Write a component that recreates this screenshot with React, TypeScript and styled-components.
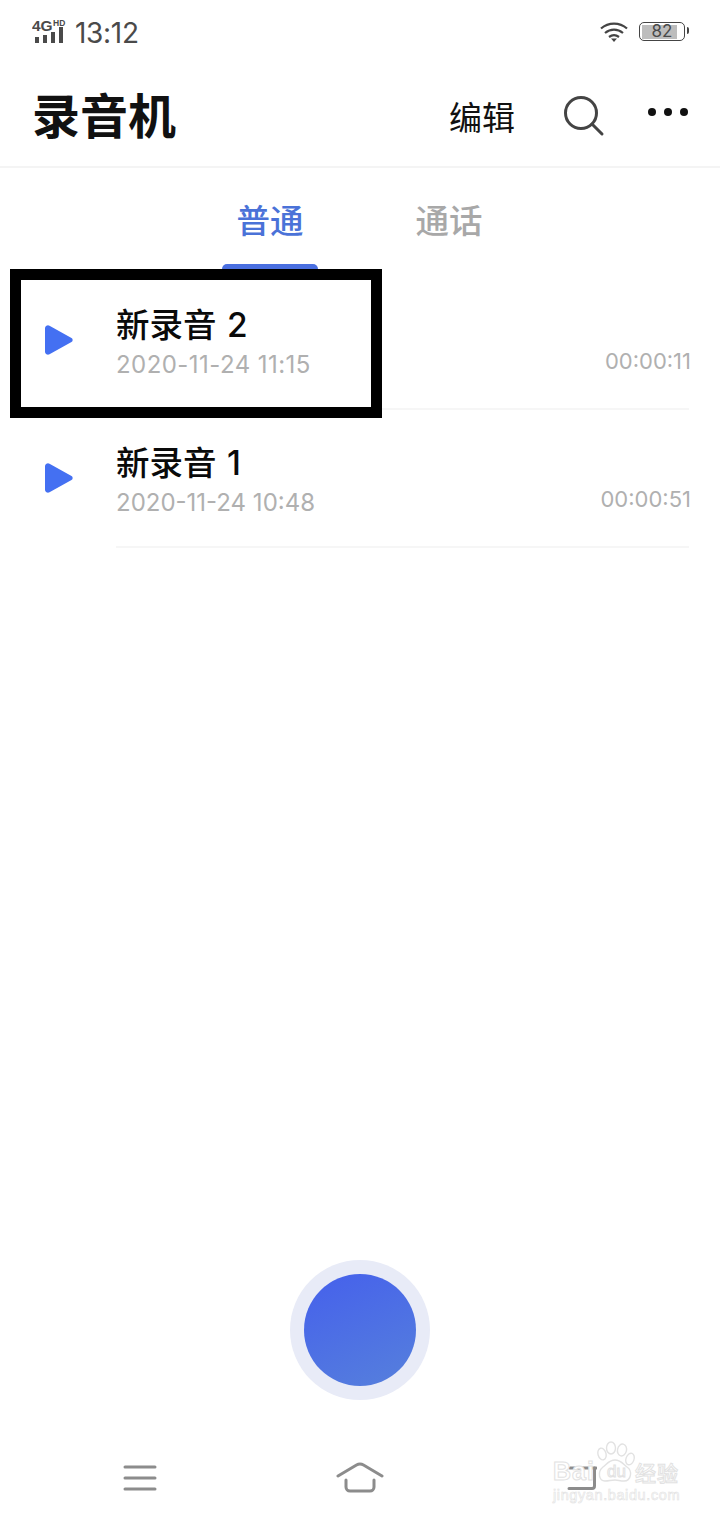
import React from 'react';
import styled, { createGlobalStyle } from 'styled-components';

const GlobalStyle = createGlobalStyle`
  html, body {
    margin: 0;
    padding: 0;
    background: #fff;
  }
  body {
    font-family: "Inter", "Noto Sans CJK SC", sans-serif;
  }
`;

const Page = styled.div`
  position: relative;
  width: 720px;
  height: 1520px;
  display: flex;
  flex-direction: column;
  overflow: hidden;
  background: #fff;
`;

const StatusBar = styled.div`
  height: 66px;
  padding: 0 32px;
  box-sizing: border-box;
  display: flex;
  align-items: center;
  justify-content: space-between;
`;

const StatusLeft = styled.div`
  display: flex;
  align-items: center;
  gap: 9px;
`;

const SignalIcon = styled.svg`
  margin-bottom: 4px;
`;

const StatusRight = styled.div`
  display: flex;
  align-items: center;
  gap: 11px;
  margin-bottom: 3px;
`;

const Clock = styled.span`
  font-family: "Inter", sans-serif;
  font-size: 28px;
  color: #4a4a4a;
  letter-spacing: -0.3px;
`;

const Battery = styled.div`
  position: relative;
  width: 46px;
  height: 19px;
  border: 1.5px solid #444;
  border-radius: 5px;
  box-sizing: border-box;
  padding: 1.5px 7.5px 1.5px 1.5px;
  display: flex;
  margin-right: 3px;
  &::after {
    content: '';
    position: absolute;
    right: -5px;
    top: 4px;
    width: 2px;
    height: 7px;
    background: #444;
    border-radius: 0 2px 2px 0;
  }
`;

const BatteryFill = styled.div`
  flex: 1;
  padding-left: 6px;
  background: #bdbdbd;
  color: #4a4a4a;
  font-size: 17px;
  line-height: 13px;
  text-align: center;
`;

const Header = styled.header`
  height: 102px;
  box-sizing: border-box;
  padding: 0 32px;
  display: flex;
  align-items: center;
  border-bottom: 2px solid #f4f4f4;
`;

const Title = styled.h1`
  flex: 1;
  margin: 0 0 6px;
  font-family: "Noto Sans CJK SC", sans-serif;
  font-size: 48px;
  font-weight: 700;
  color: #111;
  line-height: 1;
`;

const HeaderAction = styled.span`
  font-family: "Noto Sans CJK SC", sans-serif;
  font-size: 33px;
  color: #111;
  margin-right: 49px;
`;

const SearchButton = styled.div`
  display: flex;
  margin-right: 43px;
`;

const Dots = styled.div`
  display: flex;
  gap: 8px;
  margin-bottom: 8px;
`;

const Dot = styled.i`
  display: block;
  width: 8px;
  height: 8px;
  border-radius: 50%;
  background: #111;
`;

const Tabs = styled.nav`
  height: 102px;
  display: flex;
  justify-content: center;
  gap: 83px;
  padding-right: 1px;
`;

const Tab = styled.div<{ $active?: boolean }>`
  position: relative;
  width: 96px;
  padding-top: 27px;
  text-align: center;
  font-family: "Noto Sans CJK SC", sans-serif;
  font-size: 33.5px;
  font-weight: 500;
  line-height: 48px;
  color: ${(p) => (p.$active ? '#4a72d8' : '#a8a8a8')};
  box-sizing: border-box;
  ${(p) =>
    p.$active &&
    `&::after {
      content: '';
      position: absolute;
      left: 0;
      right: 0;
      bottom: 0;
      height: 6px;
      border-radius: 5px 5px 0 0;
      background: #4a6fe0;
    }`}
`;

const List = styled.div`
  flex: 1;
  padding-top: 2px;
`;

const Row = styled.div`
  height: 138px;
  display: flex;
  box-sizing: border-box;
  padding-left: 45px;
`;

const PlayIcon = styled.svg`
  width: 28px;
  height: 30px;
  margin-top: 53px;
  flex: none;
`;

const RowBody = styled.div`
  flex: 1;
  margin: 0 31px 0 43px;
  border-bottom: 2px solid #f6f6f6;
  display: flex;
  justify-content: space-between;
  align-items: flex-start;
`;

const RowName = styled.div`
  margin-top: 30px;
  font-family: "Inter", "Noto Sans CJK SC", sans-serif;
  font-size: 33.5px;
  font-weight: 500;
  word-spacing: 1.5px;
  line-height: 46px;
  color: #0a0a0a;
`;

const RowDate = styled.div<{ $spacing: number }>`
  margin-top: 1px;
  font-size: 24px;
  line-height: 32px;
  letter-spacing: ${(p) => p.$spacing}px;
  color: #b0b0b0;
`;

const Duration = styled.div`
  margin-top: 74px;
  margin-right: -2px;
  font-size: 22px;
  line-height: 30px;
  color: #b0b0b0;
`;

const RecordArea = styled.div`
  display: flex;
  justify-content: center;
  padding: 0 0 46px;
`;

const RecordRing = styled.div`
  width: 140px;
  height: 140px;
  border-radius: 50%;
  background: #e8ebf7;
  display: flex;
  align-items: center;
  justify-content: center;
`;

const RecordButton = styled.div`
  width: 112px;
  height: 112px;
  border-radius: 50%;
  background: linear-gradient(155deg, #4560ec 0%, #5680dc 100%);
`;

const NavBar = styled.div`
  height: 74px;
  padding: 0 123px 10px;
  box-sizing: border-box;
  display: flex;
  align-items: center;
  justify-content: space-between;
`;

const NavIcon = styled.svg`
  flex: none;
  fill: none;
  stroke: #8c8c8c;
  stroke-width: 3;
  stroke-linecap: round;
  stroke-linejoin: round;
`;

const Highlight = styled.div`
  position: absolute;
  left: 10px;
  top: 269px;
  width: 372px;
  height: 149px;
  box-sizing: border-box;
  border: 11px solid #000;
`;

const Watermark = styled.div`
  position: absolute;
  left: 552px;
  top: 1440px;
  width: 168px;
  height: 70px;
`;

const WatermarkText = styled.div`
  position: absolute;
  color: #fff;
  -webkit-text-stroke: 1px #e2e2e2;
`;

const WatermarkBrand = styled(WatermarkText)`
  left: 1px;
  top: 17px;
  font-family: "Liberation Sans", sans-serif;
  font-size: 25px;
  line-height: 28px;
  font-weight: 700;
  letter-spacing: 1px;
`;

const WatermarkDu = styled(WatermarkText)`
  left: 55px;
  top: 22px;
  font-family: "Liberation Sans", sans-serif;
  font-size: 17px;
  line-height: 20px;
`;

const WatermarkName = styled(WatermarkText)`
  left: 83px;
  top: 17px;
  font-family: "Noto Sans CJK SC", sans-serif;
  font-size: 21px;
  line-height: 30px;
  font-weight: 500;
  letter-spacing: 1px;
`;

const WatermarkUrl = styled(WatermarkText)`
  left: 1px;
  top: 47px;
  font-family: "Liberation Sans", sans-serif;
  font-size: 14.5px;
  line-height: 17px;
  letter-spacing: 0.6px;
  -webkit-text-stroke: 0.6px #e2e2e2;
`;

const WatermarkPaw = styled.svg`
  position: absolute;
  left: 45px;
  top: 0;
`;

const recordings = [
  { name: '新录音 2', date: '2020-11-24 11:15', duration: '00:00:11', spacing: 0.45 },
  { name: '新录音 1', date: '2020-11-24 10:48', duration: '00:00:51', spacing: 0 },
];

const App: React.FC = () => {
  return (
    <Page>
      <GlobalStyle />
      <StatusBar>
        <StatusLeft>
          <SignalIcon width="34" height="26" viewBox="0 0 34 26">
            <text x="0" y="13" fontFamily="Liberation Sans" fontWeight="700" fontSize="15.5" fill="#4a4a4a">4G</text>
            <text x="21" y="7.5" fontFamily="Liberation Sans" fontWeight="700" fontSize="8.5" fill="#4a4a4a">HD</text>
            <rect x="3" y="19" width="4" height="6" fill="#4a4a4a" />
            <rect x="11" y="17" width="4" height="8" fill="#4a4a4a" />
            <rect x="19" y="14" width="4" height="11" fill="#4a4a4a" />
            <rect x="27" y="9" width="4" height="16" fill="#4a4a4a" />
          </SignalIcon>
          <Clock>13:12</Clock>
        </StatusLeft>
        <StatusRight>
          <svg width="28" height="20" viewBox="0 0 28 20" fill="none" stroke="#444" strokeWidth="2.2">
            <path d="M1 6.5C8.5 0 19.5 0 27 6.5" />
            <path d="M5 11C10.5 6.5 17.5 6.5 23 11" />
            <path d="M9 15C12 12.8 16 12.8 19 15" />
            <path d="M11 16.5h6l-3 3.5z" fill="#444" stroke="none" />
          </svg>
          <Battery>
            <BatteryFill>82</BatteryFill>
          </Battery>
        </StatusRight>
      </StatusBar>

      <Header>
        <Title>录音机</Title>
        <HeaderAction>编辑</HeaderAction>
        <SearchButton>
          <svg width="41" height="41" viewBox="0 0 41 41" fill="none" stroke="#444" strokeWidth="3" strokeLinecap="round">
            <circle cx="17" cy="17" r="15.5" />
            <path d="M28 28L38 38" />
          </svg>
        </SearchButton>
        <Dots>
          <Dot />
          <Dot />
          <Dot />
        </Dots>
      </Header>

      <Tabs>
        <Tab $active>普通</Tab>
        <Tab>通话</Tab>
      </Tabs>

      <List>
        {recordings.map((item) => (
          <Row key={item.name}>
            <PlayIcon viewBox="0 0 28 30">
              <path d="M0 3.5a3 3 0 0 1 4.5-2.8L26.5 13a2.3 2.3 0 0 1 0 4L4.5 29.3a3 3 0 0 1-4.5-2.8z" fill="#4470f2" />
            </PlayIcon>
            <RowBody>
              <div>
                <RowName>{item.name}</RowName>
                <RowDate $spacing={item.spacing}>{item.date}</RowDate>
              </div>
              <Duration>{item.duration}</Duration>
            </RowBody>
          </Row>
        ))}
      </List>

      <RecordArea>
        <RecordRing>
          <RecordButton />
        </RecordRing>
      </RecordArea>

      <NavBar>
        <NavIcon width="34" height="26" viewBox="0 0 34 26">
          <path d="M2 2h30M2 13h30M2 24h30" />
        </NavIcon>
        <NavIcon width="50" height="32" viewBox="0 0 50 32">
          <path d="M3 14L21.5 3Q25 1 28.5 3L47 14" />
          <path d="M11 18v7a4 4 0 0 0 4 4h20a4 4 0 0 0 4-4v-7" />
        </NavIcon>
        <NavIcon width="34" height="24" viewBox="0 0 34 24">
          <path d="M7 2h26" />
          <path d="M31.5 2v18q0 2.5-2.5 2.5H6" />
        </NavIcon>
      </NavBar>

      <Highlight />

      <Watermark>
        <WatermarkPaw width="42" height="44" viewBox="0 0 42 44" fill="#fff" stroke="#e2e2e2" strokeWidth="1.4">
          <ellipse cx="5" cy="14" rx="4" ry="6" transform="rotate(-15 5 14)" />
          <ellipse cx="14" cy="8" rx="4.5" ry="6" />
          <ellipse cx="25" cy="10" rx="4.5" ry="6" transform="rotate(12 25 10)" />
          <ellipse cx="33" cy="19" rx="4" ry="6" transform="rotate(20 33 19)" />
          <path d="M18 20C24 20 26 24 30 27C36 31 34 41 27 41C23 41 21 40 18 40C14 40 12 41 8 41C2 41 0 32 6 27C10 24 12 20 18 20Z" />
        </WatermarkPaw>
        <WatermarkBrand>Bai</WatermarkBrand>
        <WatermarkDu>du</WatermarkDu>
        <WatermarkName>经验</WatermarkName>
        <WatermarkUrl>jingyan.baidu.com</WatermarkUrl>
      </Watermark>
    </Page>
  );
};

export default App;
